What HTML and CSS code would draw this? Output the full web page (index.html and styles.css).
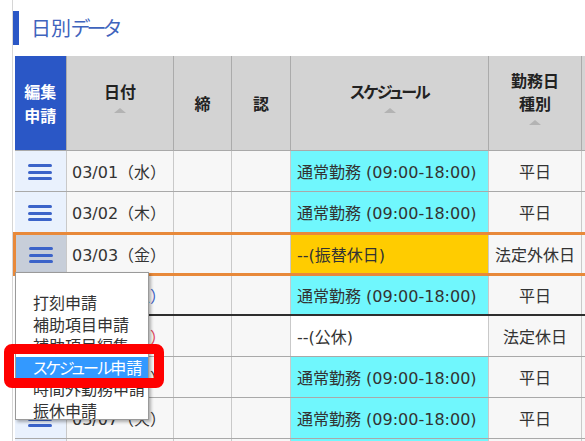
FILE: index.html
```html
<!DOCTYPE html>
<html lang="ja">
<head>
<meta charset="utf-8">
<title>日別データ</title>
<link rel="stylesheet" href="styles.css">
</head>
<body>
<div class="page">
  <h2 class="title"><span class="title-bar"></span><span class="title-text">日別<span class="kana kana-t">データ</span></span></h2>
  <table class="grid">
    <colgroup>
      <col class="c-edit"><col class="c-date"><col class="c-lock"><col class="c-ok"><col class="c-sched"><col class="c-kind"><col class="c-more">
    </colgroup>
    <thead>
      <tr>
        <th class="h-edit"><div>編集</div><div>申請</div></th>
        <th><div>日付</div><span class="sort"></span></th>
        <th><div>締</div></th>
        <th><div>認</div></th>
        <th><div class="kana">スケジュール</div><span class="sort"></span></th>
        <th><div>勤務日</div><div>種別</div><span class="sort"></span></th>
        <th></th>
      </tr>
    </thead>
    <tbody>
      <tr>
        <td class="ic"><span class="menu-ic"><i></i><i></i><i></i></span></td>
        <td class="dt">03/01（水）</td><td></td><td></td>
        <td class="sc cyan">通常勤務 (09:00-18:00)</td><td class="kd">平日</td><td class="mo"></td>
      </tr>
      <tr>
        <td class="ic"><span class="menu-ic"><i></i><i></i><i></i></span></td>
        <td class="dt">03/02（木）</td><td></td><td></td>
        <td class="sc cyan">通常勤務 (09:00-18:00)</td><td class="kd">平日</td><td class="mo"></td>
      </tr>
      <tr class="sel">
        <td class="ic"><span class="menu-ic"><i></i><i></i><i></i></span></td>
        <td class="dt">03/03（金）</td><td></td><td></td>
        <td class="sc gold">--(振替休日)</td><td class="kd">法定外休日</td><td class="mo"></td>
      </tr>
      <tr class="wk">
        <td class="ic"><span class="menu-ic"><i></i><i></i><i></i></span></td>
        <td class="dt">03/04<span class="sat">（土）</span></td><td></td><td></td>
        <td class="sc cyan">通常勤務 (09:00-18:00)</td><td class="kd">平日</td><td class="mo"></td>
      </tr>
      <tr>
        <td class="ic"><span class="menu-ic"><i></i><i></i><i></i></span></td>
        <td class="dt">03/05<span class="sun">（日）</span></td><td></td><td></td>
        <td class="sc white">--(公休)</td><td class="kd">法定休日</td><td class="mo"></td>
      </tr>
      <tr>
        <td class="ic"><span class="menu-ic"><i></i><i></i><i></i></span></td>
        <td class="dt">03/06（月）</td><td></td><td></td>
        <td class="sc cyan">通常勤務 (09:00-18:00)</td><td class="kd">平日</td><td class="mo"></td>
      </tr>
      <tr>
        <td class="ic"><span class="menu-ic"><i></i><i></i><i></i></span></td>
        <td class="dt">03/07（火）</td><td></td><td></td>
        <td class="sc cyan">通常勤務 (09:00-18:00)</td><td class="kd">平日</td><td class="mo"></td>
      </tr>
      <tr>
        <td class="ic"><span class="menu-ic"><i></i><i></i><i></i></span></td>
        <td class="dt">03/08（水）</td><td></td><td></td>
        <td class="sc cyan">通常勤務 (09:00-18:00)</td><td class="kd">平日</td><td class="mo"></td>
      </tr>
    </tbody>
  </table>

  <ul class="dropdown">
    <li class="blank"></li>
    <li>打刻申請</li>
    <li>補助項目申請</li>
    <li>補助項目編集</li>
    <li class="active"><span class="kana">スケジュール</span>申請</li>
    <li>時間外勤務申請</li>
    <li>振休申請</li>
  </ul>
  <div class="callout"></div>
</div>
</body>
</html>
```

FILE: styles.css
```css
html, body {
  margin: 0;
  padding: 0;
  background: #ffffff;
  overflow: hidden;
}
body {
  width: 585px;
  height: 441px;
  font-family: "DejaVu Sans", "Noto Sans CJK JP", sans-serif;
  color: #333333;
}
.kana {
  font-feature-settings: "palt" 1;
  letter-spacing: -1.8px;
}
.kana-t {
  letter-spacing: -3px;
}
.page {
  position: relative;
  margin-left: 12px;
  border-left: 1px solid #d6d6d6;
  height: 441px;
  padding-top: 11px;
  box-sizing: border-box;
}
.title {
  display: flex;
  align-items: center;
  gap: 12px;
  height: 34px;
  margin: 0 0 11px 0;
  font-weight: normal;
}
.title-bar {
  width: 6px;
  height: 34px;
  background: #2a57c6;
}
.title-text {
  font-family: "Noto Sans CJK JP", sans-serif;
  font-size: 20px;
  color: #3f64bd;
  line-height: 34px;
}

.grid {
  border-collapse: collapse;
  table-layout: fixed;
  width: 687px;
  font-size: 16px;
}
.c-edit { width: 52px; }
.c-date { width: 107px; }
.c-lock { width: 58px; }
.c-ok { width: 59px; }
.c-sched { width: 198px; }
.c-kind { width: 93px; }
.c-more { width: 120px; }

.grid th {
  height: 94px;
  padding: 0;
  background: #d3d3d3;
  border-left: 1px solid #ababab;
  border-right: 1px solid #ababab;
  font-family: "Noto Sans CJK JP", sans-serif;
  font-weight: bold;
  font-size: 16px;
  line-height: 23px;
  color: #222222;
  text-align: center;
  vertical-align: middle;
}
.grid th.h-edit {
  background: #2a57c6;
  color: #ffffff;
  line-height: 24px;
  border-left: none;
}
.sort {
  display: inline-block;
  width: 0;
  height: 0;
  margin-top: 5px;
  border-left: 6px solid transparent;
  border-right: 6px solid transparent;
  border-bottom: 5px solid #b3b3b3;
  vertical-align: top;
}

.grid td {
  height: 40px;
  padding: 0 6px;
  background: #f7f7f7;
  border-top: 1px solid #a9a9a9;
  border-bottom: 1px solid #a9a9a9;
  border-left: 1px solid #c9c9c9;
  border-right: 1px solid #c9c9c9;
  white-space: nowrap;
  overflow: hidden;
}
.grid td.ic {
  background: #e9f1fd;
  text-align: center;
  padding: 0;
  border-left: none;
}
.menu-ic {
  display: inline-flex;
  flex-direction: column;
  gap: 3.6px;
  vertical-align: middle;
}
.menu-ic i {
  display: block;
  width: 24px;
  height: 3px;
  border-radius: 1.5px;
  background: #3b63c9;
}
.grid td.dt { padding-left: 5px; }
.grid td.sc { padding-left: 6px; }
.grid td.cyan { background: #70f7fd; }
.grid td.gold { background: #ffcc00; }
.grid td.white { background: #ffffff; }
.grid td.kd { text-align: center; font-family: "Noto Sans CJK JP", sans-serif; padding: 0; }
.grid td.mo { background: #f7f7f7; }
.sat { color: #3b5fc4; }
.sun { color: #e0425a; }

.grid tr.sel td {
  height: 38px;
  border-top: 3px solid #e8893a;
  border-bottom: 3px solid #e8893a;
}
.grid tr.sel td.ic {
  background: #c7ced9;
  border-left: 3px solid #e8893a;
}
.grid tr.wk td {
  height: 38px;
  border-bottom: 2px solid #2e2e2e;
}

.dropdown {
  position: absolute;
  left: 2px;
  top: 272px;
  width: 134px;
  height: 148px;
  margin: 0;
  padding: 0;
  list-style: none;
  box-sizing: border-box;
  background: #ffffff;
  border: 1px solid #9a9a9a;
  box-shadow: 2px 2px 3px rgba(0, 0, 0, 0.3);
  overflow: hidden;
  font-family: "Noto Sans CJK JP", sans-serif;
  font-size: 16px;
  color: #333333;
}
.dropdown li {
  height: 21.5px;
  line-height: 21.5px;
  padding-left: 17px;
  white-space: nowrap;
}
.dropdown li.blank { height: 19px; }
.dropdown li.active {
  background: #3399ff;
  color: #ffffff;
}
.callout {
  position: absolute;
  left: -9px;
  top: 344px;
  width: 160px;
  height: 44px;
  box-sizing: border-box;
  border: 10px solid #ff0000;
  border-radius: 8px;
}
```
